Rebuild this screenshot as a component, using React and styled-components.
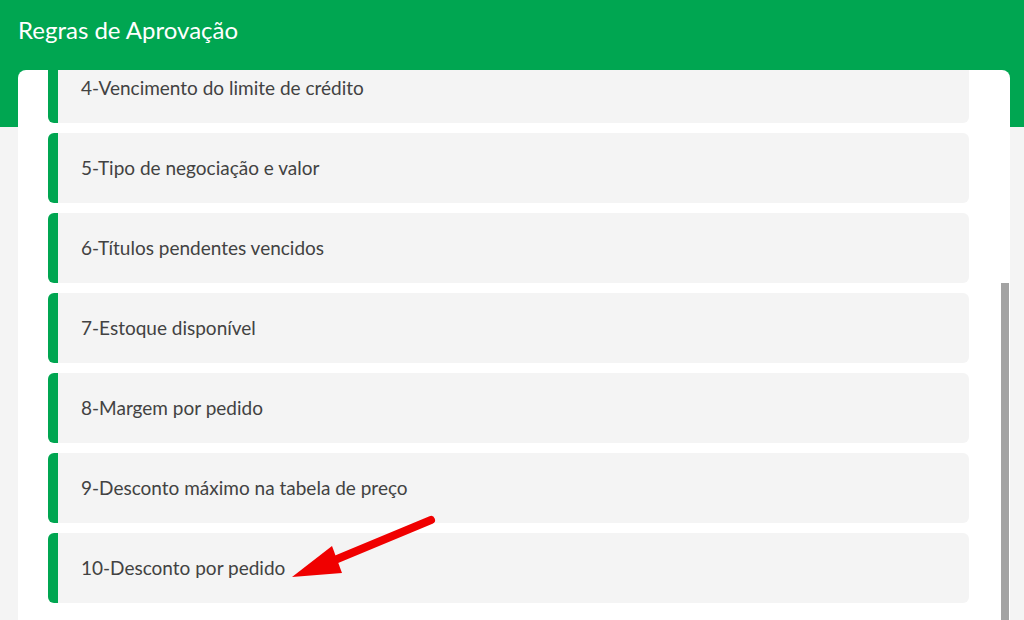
import React, { useEffect, useRef } from "react";
import styled, { createGlobalStyle } from "styled-components";

const Global = createGlobalStyle`
  html, body { margin: 0; padding: 0; height: 100%; overflow: hidden; }
  body { background: #f4f4f4; font-family: Lato, "Open Sans", sans-serif; }
`;

const Page = styled.div`
  position: relative;
  height: 620px;
  overflow: hidden;
`;

const Header = styled.header`
  height: 127px;
  background: #00a651;
  box-sizing: border-box;
  padding: 15px 18px 0;
`;

const Title = styled.h1`
  margin: 0;
  font-family: Lato, "Open Sans", sans-serif;
  font-weight: 400;
  font-size: 24px;
  line-height: 30px;
  color: #ffffff;
`;

const Card = styled.div`
  margin: -57px 14px 0 18px;
  height: 550px;
  background: #ffffff;
  border-radius: 8px 8px 0 0;
  display: flex;
  overflow: hidden;
`;

const Viewport = styled.div`
  flex: 1;
  overflow: hidden;
  box-sizing: border-box;
  padding: 0 32px 17px 30px;
  display: flex;
  flex-direction: column;
  gap: 10px;
`;

const Track = styled.div`
  width: 8px;
  margin-right: 1px;
  display: flex;
  flex-direction: column;
  padding-top: 213px;
  box-sizing: border-box;
`;

const Thumb = styled.div`
  flex: 1;
  background: #a3a3a3;
`;

const Rule = styled.div`
  flex: 0 0 70px;
  display: flex;
  align-items: center;
  background: #f4f4f4;
  border-left: 10px solid #00a651;
  border-radius: 6px;
  box-sizing: border-box;
  padding: 0 0 1px 23px;
  font-size: 19px;
  color: #424242;
`;

const Arrow = styled.svg`
  position: absolute;
  left: 0;
  top: 0;
  pointer-events: none;
`;

const rules = [
  "4-Vencimento do limite de crédito",
  "5-Tipo de negociação e valor",
  "6-Títulos pendentes vencidos",
  "7-Estoque disponível",
  "8-Margem por pedido",
  "9-Desconto máximo na tabela de preço",
  "10-Desconto por pedido",
];

export default function App() {
  const ref = useRef(null);
  useEffect(() => {
    if (ref.current) ref.current.scrollTop = 17;
  }, []);
  return (
    <Page>
      <Global />
      <Header>
        <Title>Regras de Aprovação</Title>
      </Header>
      <Card>
        <Viewport ref={ref}>
          {rules.map((r) => (
            <Rule key={r}>{r}</Rule>
          ))}
        </Viewport>
        <Track>
          <Thumb />
        </Track>
      </Card>
      <Arrow width="1024" height="620" viewBox="0 0 1024 620">
        <line x1="431" y1="520" x2="330" y2="562" stroke="#f00000" strokeWidth="8" strokeLinecap="round" />
        <polygon points="292,577 332,546 342,573" fill="#f00000" />
      </Arrow>
    </Page>
  );
}
